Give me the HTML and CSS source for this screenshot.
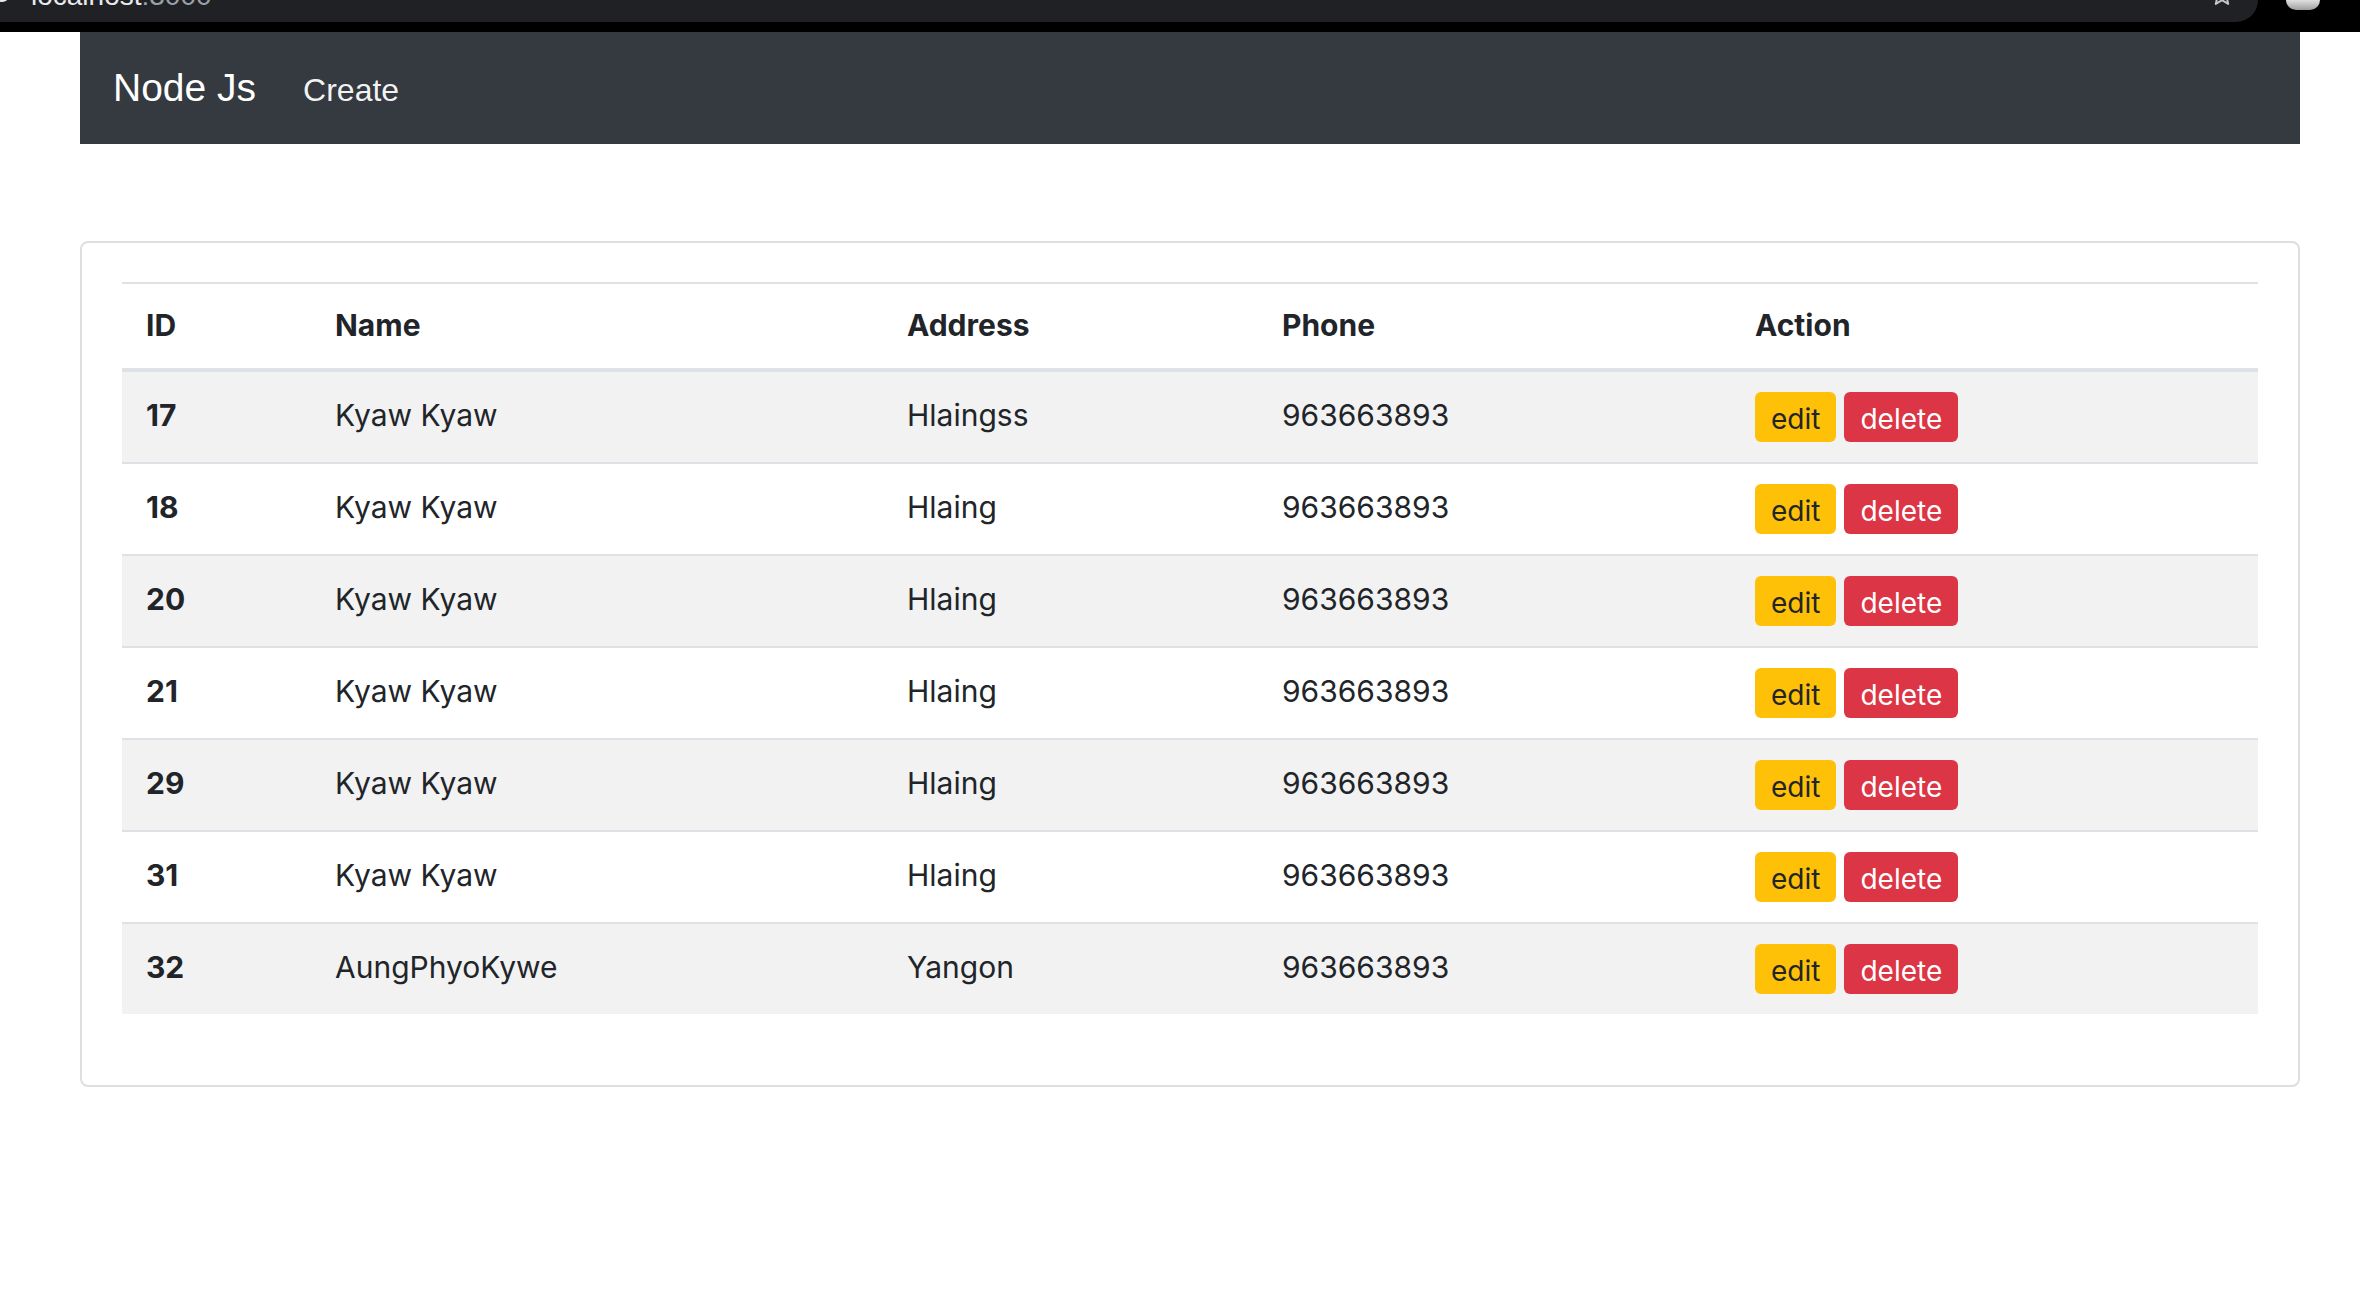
FILE: index.html
```html
<!DOCTYPE html>
<html lang="en">
<head>
<meta charset="utf-8">
<title>Node Js</title>
<link rel="stylesheet" href="styles.css">
</head>
<body>
<div class="chrome">
  <div class="urlbar">
    <svg class="site-icon" width="16" height="16" viewBox="0 0 16 16"><circle cx="4" cy="2" r="7" fill="none" stroke="#e8eaed" stroke-width="2"/></svg>
    <span class="url"><span class="host">localhost</span><span class="port">:3000</span></span>
    <svg class="star" width="24" height="24" viewBox="0 0 24 24"><path d="M12 2l2.9 6.6 7.1.6-5.4 4.7 1.6 7-6.2-3.7-6.2 3.7 1.6-7L2 9.2l7.1-.6z" fill="none" stroke="#c4c7c5" stroke-width="2" stroke-linejoin="round"/></svg>
  </div>
  <div class="ext"></div>
</div>

<div class="page">
  <nav class="navbar">
    <a class="brand" href="#">Node Js</a>
    <a class="nav-link" href="#">Create</a>
  </nav>

  <div class="card">
    <table class="table">
      <thead>
        <tr>
          <th class="c-id">ID</th>
          <th class="c-name">Name</th>
          <th class="c-addr">Address</th>
          <th class="c-phone">Phone</th>
          <th class="c-act">Action</th>
        </tr>
      </thead>
      <tbody>
        <tr><th>17</th><td>Kyaw Kyaw</td><td>Hlaingss</td><td>963663893</td><td><div class="actions"><a class="btn btn-edit" href="#">edit</a><a class="btn btn-del" href="#">delete</a></div></td></tr>
        <tr><th>18</th><td>Kyaw Kyaw</td><td>Hlaing</td><td>963663893</td><td><div class="actions"><a class="btn btn-edit" href="#">edit</a><a class="btn btn-del" href="#">delete</a></div></td></tr>
        <tr><th>20</th><td>Kyaw Kyaw</td><td>Hlaing</td><td>963663893</td><td><div class="actions"><a class="btn btn-edit" href="#">edit</a><a class="btn btn-del" href="#">delete</a></div></td></tr>
        <tr><th>21</th><td>Kyaw Kyaw</td><td>Hlaing</td><td>963663893</td><td><div class="actions"><a class="btn btn-edit" href="#">edit</a><a class="btn btn-del" href="#">delete</a></div></td></tr>
        <tr><th>29</th><td>Kyaw Kyaw</td><td>Hlaing</td><td>963663893</td><td><div class="actions"><a class="btn btn-edit" href="#">edit</a><a class="btn btn-del" href="#">delete</a></div></td></tr>
        <tr><th>31</th><td>Kyaw Kyaw</td><td>Hlaing</td><td>963663893</td><td><div class="actions"><a class="btn btn-edit" href="#">edit</a><a class="btn btn-del" href="#">delete</a></div></td></tr>
        <tr><th>32</th><td>AungPhyoKywe</td><td>Yangon</td><td>963663893</td><td><div class="actions"><a class="btn btn-edit" href="#">edit</a><a class="btn btn-del" href="#">delete</a></div></td></tr>
      </tbody>
    </table>
  </div>
</div>
</body>
</html>
```

FILE: styles.css
```css
* { box-sizing: border-box; }

html, body {
  margin: 0;
  padding: 0;
  background: #fff;
}

body {
  font-family: Inter, "Noto Sans", sans-serif;
  color: #212529;
  overflow: hidden;
}

a { text-decoration: none; }

/* browser chrome strip */
.chrome {
  height: 32px;
  background: #000;
  display: flex;
  align-items: flex-start;
  overflow: hidden;
}

.urlbar {
  width: 2258px;
  height: 22px;
  background: #202124;
  border-bottom-right-radius: 22px;
  display: flex;
  align-items: flex-start;
  overflow: hidden;
  flex: none;
}

.site-icon {
  flex: none;
  margin-top: -8px;
  margin-left: -2px;
}

.url {
  font-family: "Liberation Sans", Arial, sans-serif;
  font-size: 28px;
  line-height: 28px;
  margin-top: -18px;
  margin-left: 17px;
  white-space: nowrap;
}

.host { color: #e8eaed; }
.port { color: #9aa0a6; }

.star {
  flex: none;
  margin-left: auto;
  margin-right: 24px;
  margin-top: -17px;
}

.ext {
  width: 34px;
  height: 14px;
  margin-left: 28px;
  margin-top: -4px;
  border-radius: 0 0 10px 10px;
  background: linear-gradient(180deg, #fafafa, #9e9e9e);
  flex: none;
}

/* page */
.page {
  margin-left: 80px;
  width: 2220px;
}

.navbar {
  height: 112px;
  background: #343a40;
  display: flex;
  align-items: baseline;
  padding: 34px 30px 0 33px;
  font-family: "Liberation Sans", Arial, sans-serif;
}

.brand {
  color: #fff;
  font-size: 39px;
  line-height: 44px;
  margin-right: 47px;
}

.nav-link {
  color: rgba(255, 255, 255, 0.94);
  font-size: 32px;
  line-height: 36px;
}

.card {
  margin-top: 97px;
  border: 2px solid #dfdfdf;
  border-radius: 8px;
  padding: 39px 40px 41px 40px;
  background: #fff;
}

.table {
  width: 2136px;
  border-collapse: collapse;
  table-layout: fixed;
  margin-bottom: 30px;
  font-size: 30px;
  line-height: 45px;
}

.table th,
.table td {
  text-align: left;
  vertical-align: top;
  padding: 21px 24px 24px 24px;
  border-top: 2px solid #dee2e6;
  white-space: nowrap;
}

.table th { font-weight: 700; }
.table td { font-weight: 400; }

.table thead th {
  vertical-align: bottom;
  padding-top: 19px;
  padding-bottom: 20px;
  border-bottom: 4px solid #dee2e6;
}

.c-id { width: 189px; }
.c-name { width: 572px; }
.c-addr { width: 375px; }
.c-phone { width: 473px; }
.c-act { width: 527px; }

.table tbody tr:nth-child(odd) { background: #f2f2f2; }

.actions {
  height: 45px;
  padding-top: 3px;
  display: flex;
  align-items: center;
  gap: 8px;
}

.btn {
  flex: none;
  height: 50px;
  display: flex;
  align-items: center;
  justify-content: center;
  padding: 3px 16px 0 16px;
  border-radius: 6px;
  font-size: 28px;
  line-height: 40px;
}

.btn-edit {
  background: #ffc107;
  color: #212529;
}

.btn-del {
  background: #dc3545;
  color: #fff;
}
```
